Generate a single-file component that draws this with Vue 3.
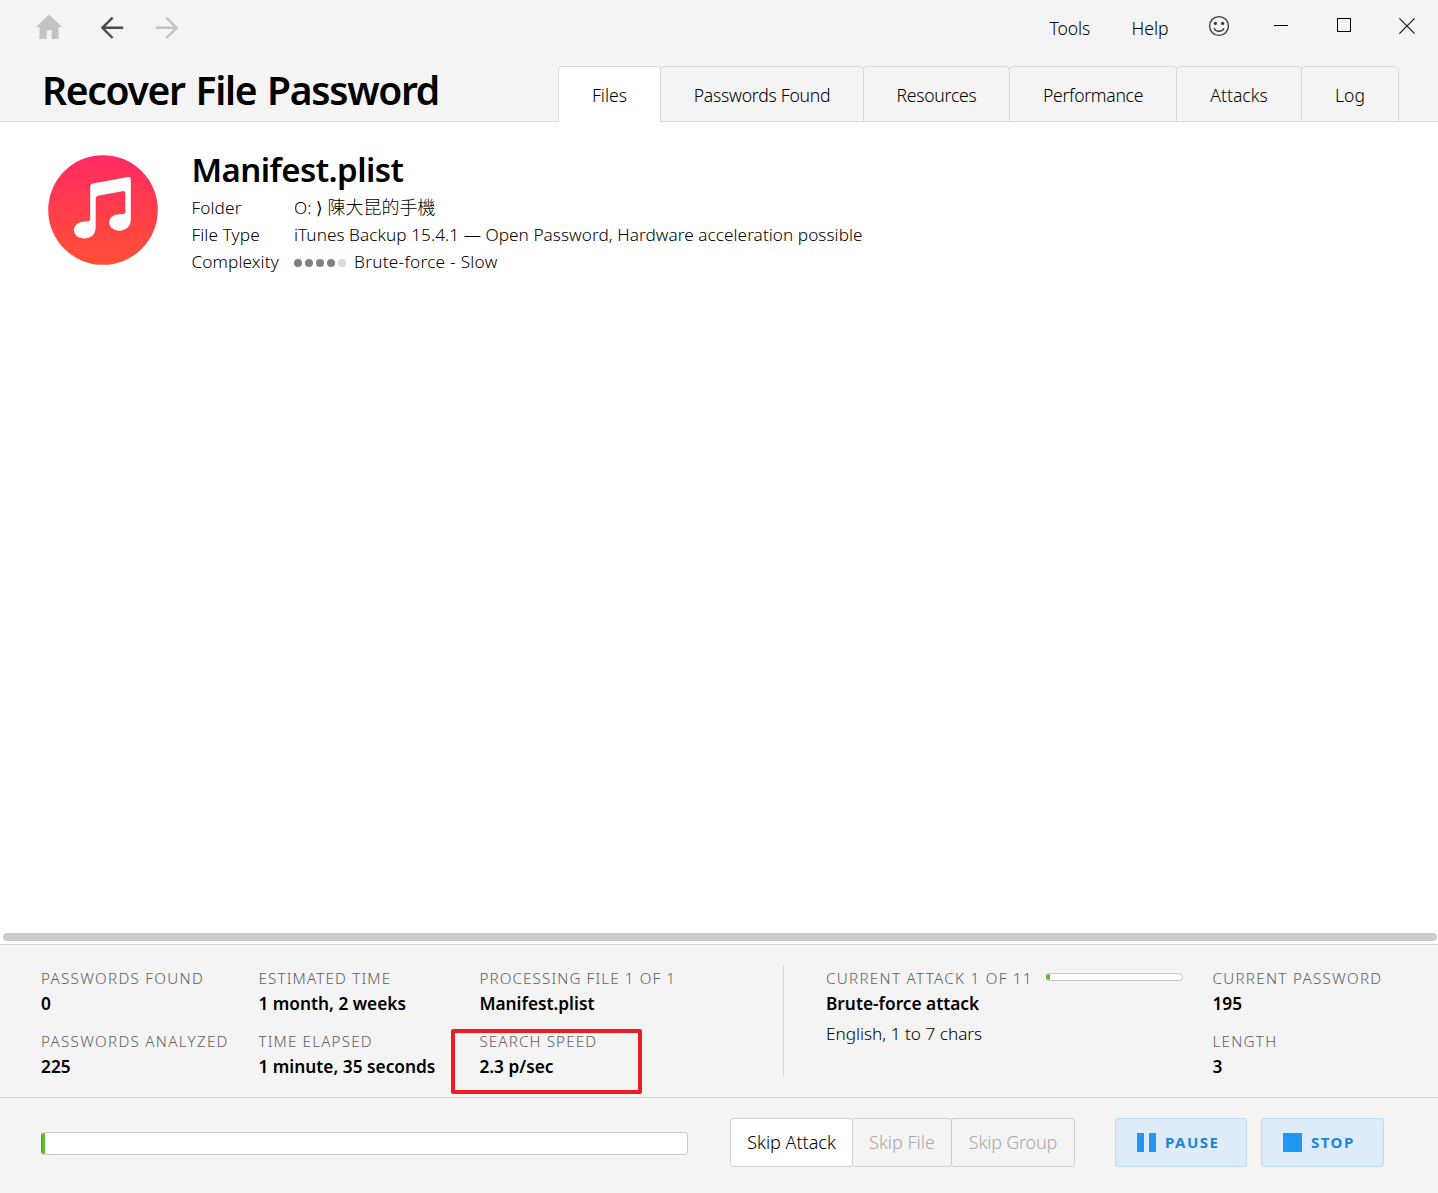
<script setup>
const tabs = [
  { label: 'Files', width: 103, active: true },
  { label: 'Passwords Found', width: 204, spacing: -0.25 },
  { label: 'Resources', width: 147, spacing: -0.25 },
  { label: 'Performance', width: 168, spacing: -0.3 },
  { label: 'Attacks', width: 126 },
  { label: 'Log', width: 98 }
]

const columns = [
  {
    key: 'passwords',
    items: [
      { label: 'PASSWORDS FOUND', value: '0' },
      { label: 'PASSWORDS ANALYZED', value: '225' }
    ]
  },
  {
    key: 'time',
    items: [
      { label: 'ESTIMATED TIME', value: '1 month, 2 weeks' },
      { label: 'TIME ELAPSED', value: '1 minute, 35 seconds' }
    ]
  },
  {
    key: 'file',
    items: [
      { label: 'PROCESSING FILE 1 OF 1', value: 'Manifest.plist' },
      { label: 'SEARCH SPEED', value: '2.3 p/sec', marked: true }
    ]
  }
]
</script>

<template>
  <div class="window">
    <header class="titlebar">
      <nav class="nav">
        <svg class="home" width="28" height="28" viewBox="0 0 28 28">
          <path d="M14 .8 27.200 13H23.600V25H16.700V16.500H11.700V25H4.500V13H.8Z" fill="#c3c3c3" />
        </svg>
        <svg class="back" width="24" height="24" viewBox="0 0 24 24" fill="none" stroke="#4a4a4a" stroke-width="2.4">
          <path d="M23.2 11.800H2.2M12.600 1.600 2.400 11.800 12.600 22" />
        </svg>
        <svg class="forward" width="24" height="24" viewBox="0 0 24 24" fill="none" stroke="#c3c3c3" stroke-width="2.4">
          <path d="M.8 11.800H21.800M11.400 1.600 21.600 11.800 11.400 22" />
        </svg>
      </nav>
      <div class="menu">
        <span class="tools">Tools</span>
        <span class="help">Help</span>
        <svg class="smile" width="22" height="22" viewBox="0 0 22 22" fill="none" stroke="#3c3c3c" stroke-width="1.4">
          <circle cx="11" cy="11" r="9.4" />
          <path d="M6 13.2C7.600 17.2 14.400 17.2 16 13.2" />
          <circle cx="7.4" cy="8.4" r="1.6" fill="#3c3c3c" stroke="none" />
          <circle cx="14.6" cy="8.4" r="1.6" fill="#3c3c3c" stroke="none" />
        </svg>
        <i class="minimize"></i>
        <i class="maximize"></i>
        <svg class="close" width="16" height="16" viewBox="0 0 16 16" stroke="#111" stroke-width="1.15">
          <path d="M.4.4 15.600 15.600M15.600.4.4 15.600" />
        </svg>
      </div>
    </header>

    <div class="heading">
      <h1>Recover File Password</h1>
      <div class="tabs">
        <div
          v-for="tab in tabs"
          :key="tab.label"
          class="tab"
          :class="{ active: tab.active }"
          :style="{ width: tab.width + 'px', letterSpacing: (tab.spacing || 0) + 'px' }"
        >{{ tab.label }}</div>
      </div>
    </div>

    <main class="content">
      <svg class="note" width="110" height="110" viewBox="0 0 110 110">
        <defs>
          <linearGradient id="disc" x1="0" y1="0" x2="0" y2="1">
            <stop offset="0" stop-color="#ff2a63" />
            <stop offset="1" stop-color="#ff5034" />
          </linearGradient>
        </defs>
        <circle cx="55" cy="55" r="54.8" fill="url(#disc)" />
        <path
          fill="#fff"
          d="M42.200 31.500Q42.200 29 44.800 28.500L80 22Q82.800 21.500 82.800 24.200V64.500C82.800 71 78 75.700 71.500 75.700C65.500 75.700 61.200 72.300 61.200 67.600C61.200 62.300 65.800 59.200 71.500 59.200H74.500Q77.300 59.200 77.300 56.500V38.500Q77.300 35.700 74.300 36.200L50 40.700Q47.700 41.200 47.700 43.700V72C47.700 79 43 83.500 36.300 83.500C30.500 83.500 26 80.200 26 75.300C26 70 30.500 66.500 36.300 66.500H39.200Q42.200 66.500 42.200 63.800Z"
        />
      </svg>
      <section class="details">
        <h2>Manifest.plist</h2>
        <dl>
          <dt>Folder</dt>
          <dd>O: ⟩ <span class="cjk">陳大昆的手機</span></dd>
          <dt>File Type</dt>
          <dd>iTunes Backup 15.4.1 — Open Password, Hardware acceleration possible</dd>
          <dt>Complexity</dt>
          <dd class="complexity">
            <span class="dots"><i v-for="n in 5" :key="n" :class="{ off: n === 5 }"></i></span>
            <span class="brute">Brute-force - Slow</span>
          </dd>
        </dl>
      </section>
      <div class="scrollbar"></div>
    </main>

    <section class="stats">
      <div v-for="column in columns" :key="column.key" class="column" :class="column.key">
        <div v-for="item in column.items" :key="item.label" class="stat">
          <div class="label">{{ item.label }}</div>
          <div class="value">{{ item.value }}</div>
          <div v-if="item.marked" class="marker"></div>
        </div>
      </div>
      <div class="divider"></div>
      <div class="column attack">
        <div class="attack-head">
          <div class="label">CURRENT ATTACK 1 OF 11</div>
          <div class="meter small"><i></i></div>
        </div>
        <div class="value">Brute-force attack</div>
        <div class="note-line">English, 1 to 7 chars</div>
      </div>
      <div class="column current">
        <div class="stat">
          <div class="label">CURRENT PASSWORD</div>
          <div class="value">195</div>
        </div>
        <div class="stat">
          <div class="label">LENGTH</div>
          <div class="value">3</div>
        </div>
      </div>
    </section>

    <footer class="footer">
      <div class="meter large"><i></i></div>
      <div class="skips">
        <button class="skip enabled">Skip Attack</button>
        <button class="skip file">Skip File</button>
        <button class="skip group">Skip Group</button>
      </div>
      <button class="action pause">
        <svg width="19" height="19" viewBox="0 0 19 19" fill="#2196f3"><path d="M0 0H7V19H0ZM12 0H19V19H12Z" /></svg>
        <span>PAUSE</span>
      </button>
      <button class="action stop">
        <svg width="19" height="19" viewBox="0 0 19 19" fill="#2196f3"><path d="M0 0H19V19H0Z" /></svg>
        <span>STOP</span>
      </button>
    </footer>
  </div>
</template>

<style>
body {
  background: #f4f4f4;
}
</style>

<style scoped>
* {
  box-sizing: border-box;
}

.window {
  display: flex;
  flex-direction: column;
  width: 1438px;
  height: 1193px;
  background: #f4f4f4;
  color: #000;
  font-family: "Noto Sans", "Open Sans", "Noto Sans CJK TC", sans-serif;
  font-weight: 300;
  font-size: 17.2px;
  white-space: nowrap;
  overflow: hidden;
}

.titlebar {
  display: flex;
  justify-content: space-between;
  height: 66px;
}

.nav {
  display: flex;
  align-items: flex-start;
  padding-left: 35px;
}

.home {
  margin-top: 14px;
}

.back {
  margin: 16px 0 0 37px;
}

.forward {
  margin: 16px 0 0 31px;
}

.menu {
  display: flex;
  align-items: flex-start;
  font-size: 17.6px;
  line-height: 24px;
}

.tools,
.help {
  margin-top: 16px;
}

.tools {
  width: 82px;
  letter-spacing: -0.1px;
}

.help {
  width: 76.5px;
}

.smile {
  margin-top: 15px;
}

.minimize {
  width: 14px;
  height: 1px;
  margin: 25px 0 0 44px;
  background: #000;
}

.maximize {
  width: 14px;
  height: 14px;
  margin: 18px 0 0 49px;
  border: 1px solid #000;
}

.close {
  margin: 18px 23px 0 48px;
}

.heading {
  display: flex;
  justify-content: space-between;
  height: 56px;
  padding: 0 39px 0 41px;
  border-bottom: 1px solid #dcdcdc;
}

h1 {
  margin: 4px 0 0 1px;
  font-size: 39px;
  font-weight: 600;
  line-height: 40px;
  letter-spacing: -1.3px;
  word-spacing: 2px;
}

.tabs {
  display: flex;
  height: 56px;
}

.tab {
  padding-top: 16px;
  margin-left: -1px;
  border: 1px solid #dadada;
  border-radius: 4px 4px 0 0;
  font-size: 17.6px;
  line-height: 24px;
  text-align: center;
}

.tab.active {
  border-bottom-color: #fff;
  background: #fff;
}

.content {
  position: relative;
  display: flex;
  align-items: flex-start;
  height: 822px;
  background: #fff;
}

.note {
  margin: 33.4px 0 0 48px;
}

.details {
  margin: 28px 0 0 33.4px;
}

h2 {
  margin: 0 0 4px;
  font-size: 33px;
  font-weight: 600;
  line-height: 40px;
  letter-spacing: -0.55px;
}

dl {
  display: grid;
  grid-template-columns: 102.6px auto;
  margin: 0;
  line-height: 27px;
}

dt,
dd {
  height: 27px;
  margin: 0;
}

dt {
  letter-spacing: 0.13px;
}

dd {
  letter-spacing: 0.05px;
}

.cjk {
  font-family: "Noto Sans CJK TC", sans-serif;
  font-size: 18px;
  line-height: 1;
  letter-spacing: 0;
}

.complexity {
  display: flex;
  align-items: center;
}

.brute {
  letter-spacing: 0.28px;
}

.dots {
  display: flex;
  gap: 3px;
  margin: 2px 8px 0 0;
}

.dots i {
  width: 8px;
  height: 8px;
  border-radius: 50%;
  background: #808080;
}

.dots .off {
  background: #dadada;
}

.scrollbar {
  position: absolute;
  left: 3px;
  right: 1px;
  bottom: 3px;
  height: 8px;
  border-radius: 4px;
  background: #cbcbcb;
}

.stats {
  display: flex;
  height: 153px;
  padding: 23px 0 0 41px;
  border-top: 1px solid #d6d6d6;
}

.column {
  flex: none;
}

.column.passwords {
  width: 217.4px;
}

.column.time {
  width: 221px;
}

.column.time .label {
  letter-spacing: 1.17px;
}

.column.file {
  width: 303.6px;
}

.column.file .label {
  letter-spacing: 1.12px;
}

.column.attack {
  width: 428.4px;
  padding-left: 42px;
}

.stat {
  position: relative;
  margin-bottom: 15px;
}

.label {
  margin-bottom: 3px;
  color: #606060;
  font-size: 15.2px;
  line-height: 20px;
  letter-spacing: 1.3px;
}

.value {
  font-size: 17.3px;
  font-weight: 600;
  line-height: 25px;
}

.marker {
  position: absolute;
  top: -2px;
  left: -28px;
  width: 191px;
  height: 65px;
  border: 4px solid #ed1c24;
  border-radius: 2px;
}

.divider {
  flex: none;
  width: 1px;
  height: 112px;
  margin-top: -3px;
  background: #d8d8d8;
}

.attack-head {
  display: flex;
  align-items: flex-start;
}

.attack-head .label {
  flex: none;
  width: 220px;
}

.note-line {
  margin-top: 4px;
  line-height: 27px;
}

.meter {
  flex: none;
  overflow: hidden;
  border: 1px solid #c8c8c8;
  background: #fff;
}

.meter i {
  display: block;
  width: 4px;
  height: 100%;
  margin-left: -1px;
  background: #5dbb2a;
}

.meter.small {
  width: 137px;
  height: 8px;
  margin-top: 5px;
  border-left-color: #4ba524;
  border-radius: 4px;
}

.meter.large {
  width: 647px;
  height: 23px;
  margin-top: 14px;
  border-left-color: #4ba524;
  border-radius: 4px;
}

.footer {
  display: flex;
  align-items: flex-start;
  height: 96px;
  padding: 20px 0 0 41px;
  border-top: 1px solid #d6d6d6;
}

button {
  padding: 0;
  font-family: inherit;
  font-size: 18px;
  line-height: 24px;
}

.skips {
  display: flex;
  margin-left: 42px;
}

.skip {
  width: 124px;
  height: 49px;
  padding-bottom: 1px;
  margin-right: -1px;
  border: 1px solid #d0d0d0;
  border-radius: 3px;
  background: #f4f4f4;
  color: #a8a8a8;
  font-weight: 300;
}

.skip.enabled {
  width: 123px;
  background: #fff;
  color: #000;
}

.skip.file {
  width: 100px;
}

.skip.group {
  letter-spacing: -0.2px;
}

.action {
  display: flex;
  align-items: center;
  height: 49px;
  padding-left: 21px;
  border: 1px solid #b8dcfa;
  border-radius: 3px;
  background: #deebf8;
  color: #1b84dc;
  font-size: 15px;
  font-weight: 700;
  letter-spacing: 1.5px;
}

.action span {
  margin: 0 0 2px 9px;
}

.pause {
  width: 132px;
  margin-left: 41px;
}

.stop {
  width: 123px;
  margin-left: 14px;
}
</style>
